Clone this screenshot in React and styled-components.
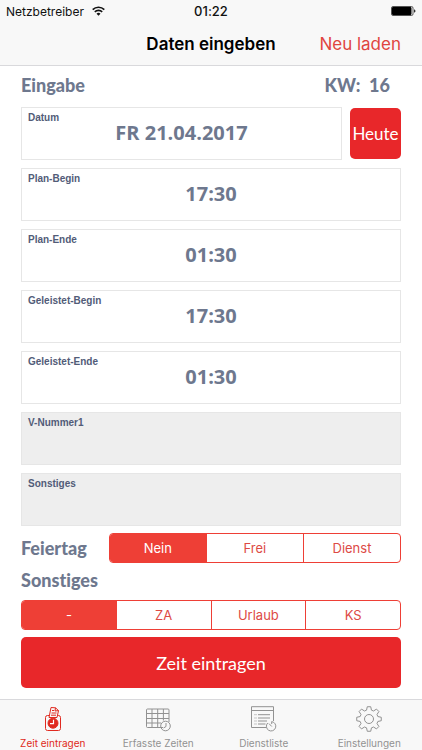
import React, { useState } from 'react';
import styled, { createGlobalStyle } from 'styled-components';

const ui = '"Inter", "Liberation Sans", sans-serif';
const form = '"Lato", "Open Sans", sans-serif';
const figures = '"Open Sans", "Lato", sans-serif';
const small = '"Liberation Sans", Arial, sans-serif';
const red = '#e8272a';
const tint = '#ee3f36';
const slate = '#6e788e';

const GlobalStyle = createGlobalStyle`
  *, *::before, *::after { box-sizing: border-box; }
  body { margin: 0; background: #fff; font-family: ${ui}; font-variant-ligatures: none; }
  button, input { font: inherit; }
`;

const Screen = styled.div`
  display: flex;
  flex-direction: column;
  min-height: 100vh;
`;

const Header = styled.header`
  background: #f8f8f8;
  border-bottom: 1px solid #d9d9dc;
`;

const StatusBar = styled.div`
  display: grid;
  grid-template-columns: 1fr auto 1fr;
  align-items: center;
  height: 22px;
  padding: 0 6px;
  font-size: 12px;
  color: #111;
`;

const Carrier = styled.span`
  display: flex;
  align-items: center;
  gap: 8px;
`;

const Clock = styled.time`
  font-size: 13px;
  font-weight: 500;
`;

const BatteryIcon = styled.svg`
  justify-self: end;
`;

const NavBar = styled.nav`
  display: grid;
  grid-template-columns: 1fr auto 1fr;
  align-items: center;
  height: 43px;
  padding: 0 21px;
`;

const Title = styled.h1`
  grid-column: 2;
  margin: 0;
  font-size: 17px;
  font-weight: 600;
  color: #000;
`;

const ReloadButton = styled.button`
  justify-self: end;
  padding: 0;
  border: 0;
  background: none;
  color: #e0453f;
  font-size: 17px;
  white-space: nowrap;
`;

const Main = styled.main`
  flex: 1;
  display: flex;
  flex-direction: column;
  padding: 0 21px 11px;
`;

const HeadingRow = styled.div`
  display: flex;
  align-items: center;
  justify-content: space-between;
  height: 41px;
  padding: 0 11px 4px 0;
`;

const Heading = styled.h2`
  margin: 0;
  font-family: ${form};
  font-size: 18px;
  line-height: 24px;
  font-weight: 900;
  color: ${slate};
  white-space: pre;
`;

const Fields = styled.div`
  display: flex;
  flex-direction: column;
  gap: 8px;
`;

const DateRow = styled.div`
  display: flex;
  align-items: center;
  gap: 8px;
`;

const Field = styled.label`
  flex: 1;
  display: flex;
  flex-direction: column;
  min-height: 53px;
  min-width: 0;
  padding: 4px 6px;
  border: 1px solid #e6e6e6;
  background: ${(p) => (p.$muted ? '#eee' : '#fff')};
`;

const FieldLabel = styled.span`
  font-family: ${small};
  font-size: 10px;
  line-height: 12px;
  font-weight: 700;
  color: #525c78;
`;

const FieldInput = styled.input`
  width: 100%;
  height: 16px;
  padding: 0;
  border: 0;
  outline: 0;
  background: none;
  font-family: ${figures};
  font-size: 20px;
  line-height: 16px;
  font-weight: 700;
  text-align: center;
  color: ${slate};
`;

const FilledButton = styled.button`
  width: ${(p) => p.$width};
  height: 51px;
  padding: 0;
  border: 0;
  border-radius: 5px;
  background: ${red};
  color: #fff;
  font-family: ${form};
  font-size: ${(p) => (p.$large ? '18px' : '17px')};
  font-weight: 400;
`;

const HolidayRow = styled.div`
  display: grid;
  grid-template-columns: 3fr 10fr;
  align-items: center;
  margin-top: 7px;
`;

const KindGroup = styled.div`
  display: flex;
  flex-direction: column;
  gap: 8px;
  margin: 5px 0 7px;
`;

const Segments = styled.div`
  display: flex;
  height: 30px;
  border: 1px solid ${tint};
  border-radius: 4px;
  overflow: hidden;
`;

const Segment = styled.label`
  flex: 1;
  position: relative;
  display: flex;
  align-items: center;
  justify-content: center;
  font-size: 13px;
  color: #dd4a45;

  & + & { border-left: 1px solid ${tint}; }
  &:has(input:checked) { background: ${tint}; color: #fff; }
`;

const SegmentInput = styled.input`
  appearance: none;
  position: absolute;
  inset: 0;
  margin: 0;
`;

const TabBar = styled.nav`
  display: grid;
  grid-template-columns: repeat(4, 1fr);
  height: 51px;
  border-top: 1px solid #d9d9dc;
  background: #f8f8f8;
`;

const Tab = styled.a`
  display: flex;
  flex-direction: column;
  align-items: center;
  gap: 4px;
  padding-top: 6px;
  color: ${(p) => (p.$active ? '#e02a20' : '#929292')};
  font-size: 10px;
  line-height: 14px;
  text-decoration: none;
  white-space: nowrap;
`;

const TabIcon = styled.svg`
  width: 28px;
  height: 26px;
  fill: none;
  stroke: currentColor;
  stroke-width: 1;
`;

const gearPath = (() => {
  const cx = 14;
  const cy = 13;
  const points = [];
  for (let i = 0; i < 8; i += 1) {
    const base = (i * Math.PI) / 4 - Math.PI / 2;
    [[-0.27, 9.2], [-0.14, 12.4], [0.14, 12.4], [0.27, 9.2]].forEach(([a, r]) => {
      points.push(`${(cx + r * Math.cos(base + a)).toFixed(2)} ${(cy + r * Math.sin(base + a)).toFixed(2)}`);
    });
  }
  return `M${points.join('L')}Z`;
})();

function PunchIcon() {
  return (
    <TabIcon viewBox="0 0 28 26" aria-hidden="true">
      <rect x="6.5" y="9.5" width="15" height="15" rx="2" />
      <path fill="#f8f8f8" d="M10 11.5 12 1.5 16.5 1.8 19.5 4.6 18 11.5Z" />
      <path d="M16.5 1.8 16 5 19.5 4.6M13 4.5h2M12.5 7h5M12 9.2h5" />
      <circle cx="14" cy="17.2" r="5" fill="currentColor" />
      <path stroke="#fff" strokeWidth="1.2" d="M14.5 13.7V17.7H11" />
    </TabIcon>
  );
}

function TableIcon() {
  return (
    <TabIcon viewBox="0 0 28 26" aria-hidden="true">
      <path d="M19 21.5H3.5a1 1 0 0 1-1-1V4a1 1 0 0 1 1-1H24a1 1 0 0 1 1 1V16M2.5 7.5H25M2.5 12.5H25M2.5 17H17M8 3V21.5M13.7 3V21.5M19.4 3V14.5" />
      <circle cx="21.5" cy="20" r="4.8" />
      <path d="M22 17V20.5L19.5 22" />
    </TabIcon>
  );
}

function ListIcon() {
  return (
    <TabIcon viewBox="1 0 28 26" aria-hidden="true">
      <path d="M17 21.5H2.5V.7H24.5V15M2.5 4.5H24.5M9 8.7H21M9 12H21M9 15H18M9 18H16.5" />
      <path strokeDasharray="1 1" d="M5.5 8.7H8M5.5 12H8M5.5 15H8M5.5 18H8" />
      <path d="M22.7 15.6A4.7 4.7 0 1 1 18.7 17M22.7 15.6V18M20 17.6 22.8 20.5" />
    </TabIcon>
  );
}

function GearIcon() {
  return (
    <TabIcon viewBox="0 0 28 26" aria-hidden="true">
      <path d={gearPath} strokeLinejoin="round" />
      <circle cx="14" cy="13" r="4.5" />
    </TabIcon>
  );
}

function SegmentedControl({ name, label, options }) {
  const [value, setValue] = useState(options[0]);
  return (
    <Segments role="radiogroup" aria-label={label}>
      {options.map((option) => (
        <Segment key={option}>
          <SegmentInput
            type="radio"
            name={name}
            checked={value === option}
            onChange={() => setValue(option)}
          />
          {option}
        </Segment>
      ))}
    </Segments>
  );
}

function EntryField({ label, value = '', muted = false }) {
  return (
    <Field $muted={muted}>
      <FieldLabel>{label}</FieldLabel>
      <FieldInput type="text" defaultValue={value} />
    </Field>
  );
}

const fields = [
  { label: 'Plan-Begin', value: '17:30' },
  { label: 'Plan-Ende', value: '01:30' },
  { label: 'Geleistet-Begin', value: '17:30' },
  { label: 'Geleistet-Ende', value: '01:30' },
  { label: 'V-Nummer1', muted: true },
  { label: 'Sonstiges', muted: true },
];

const tabs = [
  { label: 'Zeit eintragen', Icon: PunchIcon, active: true },
  { label: 'Erfasste Zeiten', Icon: TableIcon },
  { label: 'Dienstliste', Icon: ListIcon },
  { label: 'Einstellungen', Icon: GearIcon },
];

export default function App() {
  return (
    <Screen>
      <GlobalStyle />
      <Header>
        <StatusBar>
          <Carrier>
            Netzbetreiber
            <svg width="13" height="10" viewBox="0 0 13 10" fill="none" stroke="#111" strokeWidth="1.6" aria-hidden="true">
              <path d="M.7 3.6a8.2 8.2 0 0 1 11.6 0M2.8 5.9a5.2 5.2 0 0 1 7.4 0" />
              <path fill="#111" stroke="none" d="M4.5 7.7a2.8 2.8 0 0 1 4 0l-2 2z" />
            </svg>
          </Carrier>
          <Clock>01:22</Clock>
          <BatteryIcon width="25" height="10" viewBox="0 0 25 10" aria-hidden="true">
            <rect x=".5" y=".5" width="21.5" height="9" rx="1.5" fill="#fff" stroke="#555" />
            <rect x="1" y="1" width="19.5" height="8" rx="1" />
            <path d="M23.2 3.3a1.8 1.8 0 0 1 0 3.4z" />
          </BatteryIcon>
        </StatusBar>
        <NavBar>
          <Title>Daten eingeben</Title>
          <ReloadButton type="button">Neu laden</ReloadButton>
        </NavBar>
      </Header>
      <Main>
        <HeadingRow>
          <Heading>Eingabe</Heading>
          <Heading>{'KW:  16'}</Heading>
        </HeadingRow>
        <Fields>
          <DateRow>
            <EntryField label="Datum" value="FR 21.04.2017" />
            <FilledButton type="button" $width="51px">Heute</FilledButton>
          </DateRow>
          {fields.map((field) => (
            <EntryField key={field.label} {...field} />
          ))}
        </Fields>
        <HolidayRow>
          <Heading>Feiertag</Heading>
          <SegmentedControl name="holiday" label="Feiertag" options={['Nein', 'Frei', 'Dienst']} />
        </HolidayRow>
        <KindGroup>
          <Heading>Sonstiges</Heading>
          <SegmentedControl name="kind" label="Sonstiges" options={['-', 'ZA', 'Urlaub', 'KS']} />
        </KindGroup>
        <FilledButton type="button" $width="100%" $large>Zeit eintragen</FilledButton>
      </Main>
      <TabBar>
        {tabs.map(({ label, Icon, active }) => (
          <Tab key={label} href="#" $active={active} aria-current={active ? 'page' : undefined}>
            <Icon />
            {label}
          </Tab>
        ))}
      </TabBar>
    </Screen>
  );
}
